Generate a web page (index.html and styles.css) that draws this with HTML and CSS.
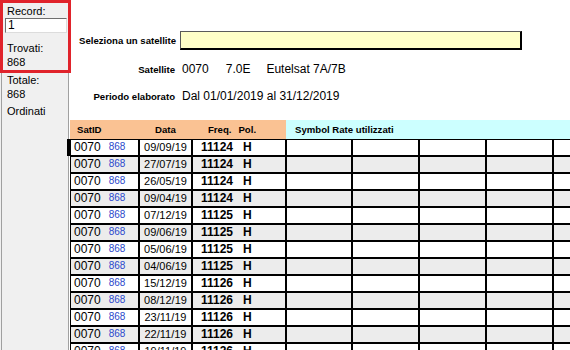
FILE: index.html
```html
<!DOCTYPE html>
<html lang="it">
<head>
<meta charset="utf-8">
<title>Satelliti</title>
<link rel="stylesheet" href="styles.css">
</head>
<body>
<div class="app">
  <aside class="sidebar">
    <div class="lbl first">Record:</div>
    <div class="recbox">1</div>
    <div class="lbl gap1">Trovati:</div>
    <div class="lbl">868</div>
    <div class="lbl gap2">Totale:</div>
    <div class="lbl">868</div>
    <div class="lbl gap3">Ordinati</div>
  </aside>
  <main class="main">
    <section class="filters">
      <span class="flabel left">Seleziona un satellite</span>
      <div class="yellow"></div>
      <span class="flabel">Satellite</span>
      <div class="val"><span>0070</span><span class="v2">7.0E</span><span class="v3">Eutelsat 7A/7B</span></div>
      <span class="flabel">Periodo elaborato</span>
      <div class="val">Dal 01/01/2019 al 31/12/2019</div>
    </section>
    <div class="table">
      <div class="thead">
        <div class="h-orange">
          <span class="h-sat">SatID</span>
          <span class="h-data">Data</span>
          <span class="h-freq">Freq.</span><span class="h-pol">Pol.</span>
        </div>
        <div class="h-cyan">Symbol Rate utilizzati</div>
      </div>
      <div class="row current"><div class="c c1"><span class="sid">0070</span><span class="cnt">868</span></div><div class="c c2">09/09/19</div><div class="c c3"><span>11124</span><span class="pol">H</span></div><div class="c"></div><div class="c"></div><div class="c"></div><div class="c"></div><div class="c"></div></div>
      <div class="row alt"><div class="c c1"><span class="sid">0070</span><span class="cnt">868</span></div><div class="c c2">27/07/19</div><div class="c c3"><span>11124</span><span class="pol">H</span></div><div class="c"></div><div class="c"></div><div class="c"></div><div class="c"></div><div class="c"></div></div>
      <div class="row"><div class="c c1"><span class="sid">0070</span><span class="cnt">868</span></div><div class="c c2">26/05/19</div><div class="c c3"><span>11124</span><span class="pol">H</span></div><div class="c"></div><div class="c"></div><div class="c"></div><div class="c"></div><div class="c"></div></div>
      <div class="row alt"><div class="c c1"><span class="sid">0070</span><span class="cnt">868</span></div><div class="c c2">09/04/19</div><div class="c c3"><span>11124</span><span class="pol">H</span></div><div class="c"></div><div class="c"></div><div class="c"></div><div class="c"></div><div class="c"></div></div>
      <div class="row"><div class="c c1"><span class="sid">0070</span><span class="cnt">868</span></div><div class="c c2">07/12/19</div><div class="c c3"><span>11125</span><span class="pol">H</span></div><div class="c"></div><div class="c"></div><div class="c"></div><div class="c"></div><div class="c"></div></div>
      <div class="row alt"><div class="c c1"><span class="sid">0070</span><span class="cnt">868</span></div><div class="c c2">09/06/19</div><div class="c c3"><span>11125</span><span class="pol">H</span></div><div class="c"></div><div class="c"></div><div class="c"></div><div class="c"></div><div class="c"></div></div>
      <div class="row"><div class="c c1"><span class="sid">0070</span><span class="cnt">868</span></div><div class="c c2">05/06/19</div><div class="c c3"><span>11125</span><span class="pol">H</span></div><div class="c"></div><div class="c"></div><div class="c"></div><div class="c"></div><div class="c"></div></div>
      <div class="row alt"><div class="c c1"><span class="sid">0070</span><span class="cnt">868</span></div><div class="c c2">04/06/19</div><div class="c c3"><span>11125</span><span class="pol">H</span></div><div class="c"></div><div class="c"></div><div class="c"></div><div class="c"></div><div class="c"></div></div>
      <div class="row"><div class="c c1"><span class="sid">0070</span><span class="cnt">868</span></div><div class="c c2">15/12/19</div><div class="c c3"><span>11126</span><span class="pol">H</span></div><div class="c"></div><div class="c"></div><div class="c"></div><div class="c"></div><div class="c"></div></div>
      <div class="row alt"><div class="c c1"><span class="sid">0070</span><span class="cnt">868</span></div><div class="c c2">08/12/19</div><div class="c c3"><span>11126</span><span class="pol">H</span></div><div class="c"></div><div class="c"></div><div class="c"></div><div class="c"></div><div class="c"></div></div>
      <div class="row"><div class="c c1"><span class="sid">0070</span><span class="cnt">868</span></div><div class="c c2">23/11/19</div><div class="c c3"><span>11126</span><span class="pol">H</span></div><div class="c"></div><div class="c"></div><div class="c"></div><div class="c"></div><div class="c"></div></div>
      <div class="row alt"><div class="c c1"><span class="sid">0070</span><span class="cnt">868</span></div><div class="c c2">22/11/19</div><div class="c c3"><span>11126</span><span class="pol">H</span></div><div class="c"></div><div class="c"></div><div class="c"></div><div class="c"></div><div class="c"></div></div>
      <div class="row"><div class="c c1"><span class="sid">0070</span><span class="cnt">868</span></div><div class="c c2">19/11/19</div><div class="c c3"><span>11126</span><span class="pol">H</span></div><div class="c"></div><div class="c"></div><div class="c"></div><div class="c"></div><div class="c"></div></div>
    </div>
  </main>
  <div class="highlight"></div>
</div>
</body>
</html>
```

FILE: styles.css
```css
html, body {
  margin: 0;
  padding: 0;
}
body {
  width: 570px;
  height: 350px;
  overflow: hidden;
  font-family: "Liberation Sans", Arial, sans-serif;
  color: #000;
  background: #f0f0f0;
}
.app {
  position: relative;
  display: flex;
  height: 350px;
  overflow: hidden;
}

/* ---------- sidebar ---------- */
.sidebar {
  flex: none;
  width: 63px;
  margin-left: 1px;
  padding: 4px 0 0 3px;
  background: #f0f0f0;
  border-left: 1px solid #a0a0a0;
  border-right: 1px solid #a0a0a0;
  font-size: 11px;
}
.lbl {
  line-height: 14px;
  padding-left: 2px;
  white-space: nowrap;
}
.lbl.first { line-height: 14px; }
.recbox {
  width: 58px;
  height: 13px;
  margin-top: 0;
  background: #fff;
  border: 1px solid;
  border-color: #6e6e6e #dcdcdc #dcdcdc #6e6e6e;
  font-size: 12px;
  line-height: 13px;
  padding-left: 2px;
  box-sizing: content-box;
}
.gap1 { margin-top: 8px; }
.gap2 { margin-top: 4px; }
.gap3 { margin-top: 3px; }

.highlight {
  position: absolute;
  left: 0;
  top: 0;
  width: 65px;
  height: 67px;
  border: 3px solid #e0232b;
}

/* ---------- main ---------- */
.main {
  flex: 1;
  min-width: 0;
  background: #fff;
  padding-top: 31px;
}
.filters {
  display: grid;
  grid-template-columns: 96px 342px;
  grid-template-rows: 19px 18px 16px;
  row-gap: 10px;
  column-gap: 5px;
  margin-left: 10px;
  align-items: center;
}
.flabel {
  font-weight: bold;
  font-size: 9.6px;
  text-align: right;
  white-space: nowrap;
}
.flabel.left { text-align: left; }
.yellow {
  height: 16px;
  background: #ffffc8;
  border-top: 1px solid #5a5a5a;
  border-left: 1px solid #5a5a5a;
  border-right: 2px solid #000;
  border-bottom: 2px solid #000;
}
.val {
  font-size: 12px;
  line-height: 16px;
  padding-left: 2px;
  white-space: nowrap;
}
.val .v2 { margin-left: 17px; }
.val .v3 { margin-left: 16px; }

/* ---------- table ---------- */
.table {
  margin-top: 16px;
  margin-left: 1px;
  width: 560px;
}
.thead {
  display: grid;
  grid-template-columns: 216px 1fr;
  height: 19px;
  font-weight: bold;
  font-size: 9.6px;
  line-height: 19px;
}
.h-orange {
  background: #fac293;
  display: flex;
}
.h-cyan {
  background: #ccffff;
  padding-left: 9px;
}
.h-sat { padding-left: 7px; width: 62px; }
.h-data { width: 53px; text-align: center; }
.h-freq { margin-left: 16px; }
.h-pol { margin-left: 7px; }

.row {
  display: grid;
  grid-template-columns: 69px 53px 94px 66px 67px 67px 67px 67px;
  height: 17px;
  background: #fff;
}
.row.alt { background: #ececec; }
.c {
  border: 1px solid #000;
  line-height: 15px;
  white-space: nowrap;
  overflow: hidden;
}
.c1 {
  display: flex;
  align-items: flex-start;
  padding-left: 3px;
}
.row.current .c1 {
  margin-left: -3px;
  border-left-width: 4px;
}
.sid {
  font-size: 12px;
  line-height: 15px;
}
.cnt {
  font-size: 10px;
  line-height: 13px;
  color: #2a48cc;
  margin-left: 8px;
}
.c2 {
  font-size: 11px;
  text-align: center;
}
.c3 {
  font-weight: bold;
  font-size: 12px;
  padding-left: 8px;
}
.c3 .pol { margin-left: 10px; }
```
